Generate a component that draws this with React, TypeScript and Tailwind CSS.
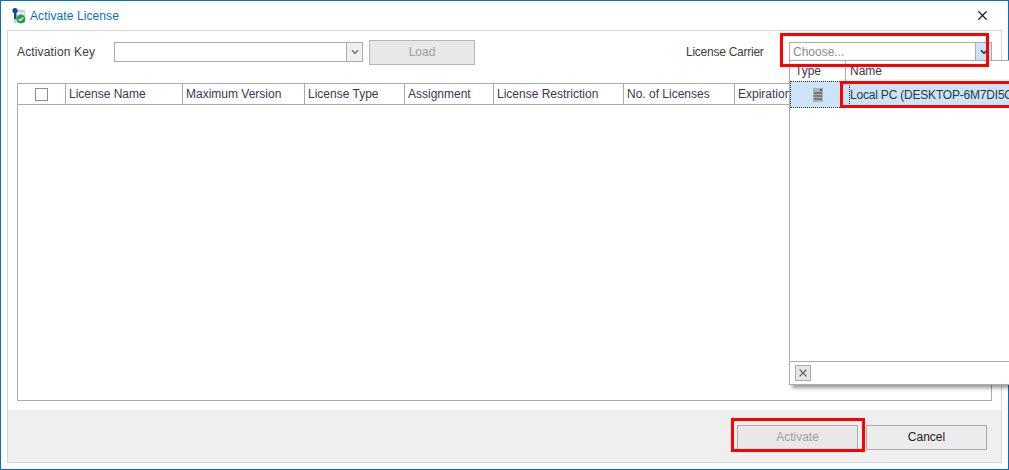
import { ChevronDown, X } from "lucide-react";

const font = { fontFamily: '"Liberation Sans", Arial, sans-serif' };

const columns = [
  { label: "License Name", width: "w-[117px]" },
  { label: "Maximum Version", width: "w-[122px]" },
  { label: "License Type", width: "w-[100px]" },
  { label: "Assignment", width: "w-[89px]" },
  { label: "License Restriction", width: "w-[130px]" },
  { label: "No. of Licenses", width: "w-[111px]" },
  { label: "Expiration Date", width: "flex-1" },
];

function ComboArrow({ active }: { active?: boolean }) {
  return (
    <div
      className={`flex shrink-0 w-4 h-full items-center justify-center border-l border-[#ababab] ${
        active ? "bg-[#cce4f7]" : "bg-[#f0f0f0]"
      }`}
    >
      <ChevronDown size={10} strokeWidth={4} className={active ? "text-[#333]" : "text-[#777]"} />
    </div>
  );
}

function AppIcon() {
  return (
    <svg width="16" height="17" viewBox="0 0 16 17" className="shrink-0">
      <rect x="3" y="3" width="11" height="13" fill="#b9d3e6" />
      <rect x="5" y="5" width="8" height="3" fill="#e4eef5" />
      <circle cx="4" cy="3.5" r="2.6" fill="#0f4c8a" />
      <rect x="3" y="5" width="2.4" height="7" fill="#0f4c8a" />
      <circle cx="10" cy="12" r="4.4" fill="#1f9e3c" />
      <path d="M7.8 12l1.6 1.6 2.8-3" fill="none" stroke="#fff" strokeWidth="1.4" />
    </svg>
  );
}

export default function App() {
  return (
    <div className="relative w-[1009px] h-[470px] overflow-hidden bg-white text-[12px] text-[#3c3c3c]" style={font}>
      {/* janela */}
      <div className="flex flex-col w-[1009px] h-[470px] border border-[#0071c5]">
        <div className="flex h-[29px] items-center pl-[10px] pr-[18px]">
          <AppIcon />
          <span className="ml-[3px] tracking-[0.1px] text-[#0071c5]">Activate License</span>
          <X size={15} strokeWidth={2} className="ml-auto text-[#222]" />
        </div>

        <div className="flex flex-col flex-1 mx-[6px] mb-[6px] border border-[#d6d6d6]">
          <div className="flex flex-col flex-1 px-[9px]">
            <div className="flex items-center h-[42px] mb-[10px]">
              <span className="w-[97px] tracking-[0.15px]">Activation Key</span>
              <div className="flex justify-end w-[249px] h-[20px] mb-[1px] bg-white border border-[#ababab]">
                <ComboArrow />
              </div>
              <button className="ml-[6px] w-[106px] h-[25px] border border-[#b5b5b5] bg-[#e8e8e8] text-[#a0a0a0]">
                Load
              </button>
              <span className="ml-[211px] w-[103px] tracking-[-0.25px]">License Carrier</span>
              <div className="flex items-center justify-between w-[203px] h-[20px] mb-[1px] pl-[3px] bg-white border border-[#ababab] text-[#8a8a8a]">
                Choose...
                <ComboArrow active />
              </div>
            </div>

            <div className="flex flex-col flex-1 border border-[#ababab] mb-[9px]">
              <div className="flex h-[21px] border-b border-[#ababab]">
                <div className="flex w-[48px] items-center justify-center border-r border-[#ababab]">
                  <div className="size-[13px] border border-[#8e8e8e] bg-white" />
                </div>
                {columns.map((c) => (
                  <div
                    key={c.label}
                    className={`${c.width} pl-[3px] leading-[20px] whitespace-nowrap overflow-hidden border-r border-[#ababab] text-[#3d3650]`}
                  >
                    {c.label}
                  </div>
                ))}
              </div>
            </div>
          </div>

          <div className="flex justify-end items-center gap-[8px] h-[52px] pr-[14px] pt-[2px] bg-[#efefef]">
            <button className="w-[121px] h-[25px] border border-[#ababab] bg-[#e8e8e8] text-[#a0a0a0]">
              Activate
            </button>
            <button className="w-[121px] h-[25px] border border-[#ababab] bg-[#ececec] text-[#222]">
              Cancel
            </button>
          </div>
        </div>
      </div>

      {/* popup do combo */}
      <div className="absolute left-[789px] top-[60px] flex flex-col w-[240px] h-[325px] bg-white border border-[#ababab] shadow-[3px_3px_4px_rgba(0,0,0,0.4)]">
        <div className="flex h-[20px] leading-[20px] text-[#3d3650]">
          <div className="w-[56px] pl-[5px] border-r border-[#ababab]">Type</div>
          <div className="pl-[4px]">Name</div>
        </div>
        <div className="flex h-[27px] bg-[#cce4f7]">
          <div className="flex shrink-0 w-[60px] pr-[5px] items-center justify-center border border-dotted border-[#333]">
            <div className="relative flex flex-col gap-[1px] pt-[2px] justify-center items-center w-[10px] h-[14px] bg-[#b0b0b0]">
              <div className="absolute right-[1px] top-[1px] size-[2px] bg-[#555]" />
              <div className="w-[8px] h-[2px] bg-[#7a7a7a]" />
              <div className="w-[8px] h-[2px] bg-[#7a7a7a]" />
              <div className="w-[8px] h-[2px] bg-[#7a7a7a]" />
            </div>
          </div>
          <div className="leading-[28px] tracking-[-0.2px] whitespace-nowrap text-[#2b3a42]">Local PC (DESKTOP-6M7DI5OV)</div>
        </div>
        <div className="flex-1" />
        <div className="flex items-center h-[23px] pl-[5px] border-t border-[#ababab]">
          <div className="flex items-center justify-center size-[16px] border border-[#ababab] bg-[#e6e6e6]">
            <X size={12} strokeWidth={2.5} className="text-[#666]" />
          </div>
        </div>
      </div>

      {/* marcações vermelhas */}
      <div className="absolute left-[780px] top-[33px] w-[209px] h-[34px] border-[3px] border-[#f00]" />
      <div className="absolute left-[840px] top-[81px] w-[180px] h-[27px] border-[3px] border-[#f00]" />
      <div className="absolute left-[731px] top-[418px] w-[134px] h-[34px] border-[3px] border-[#f00]" />
    </div>
  );
}
